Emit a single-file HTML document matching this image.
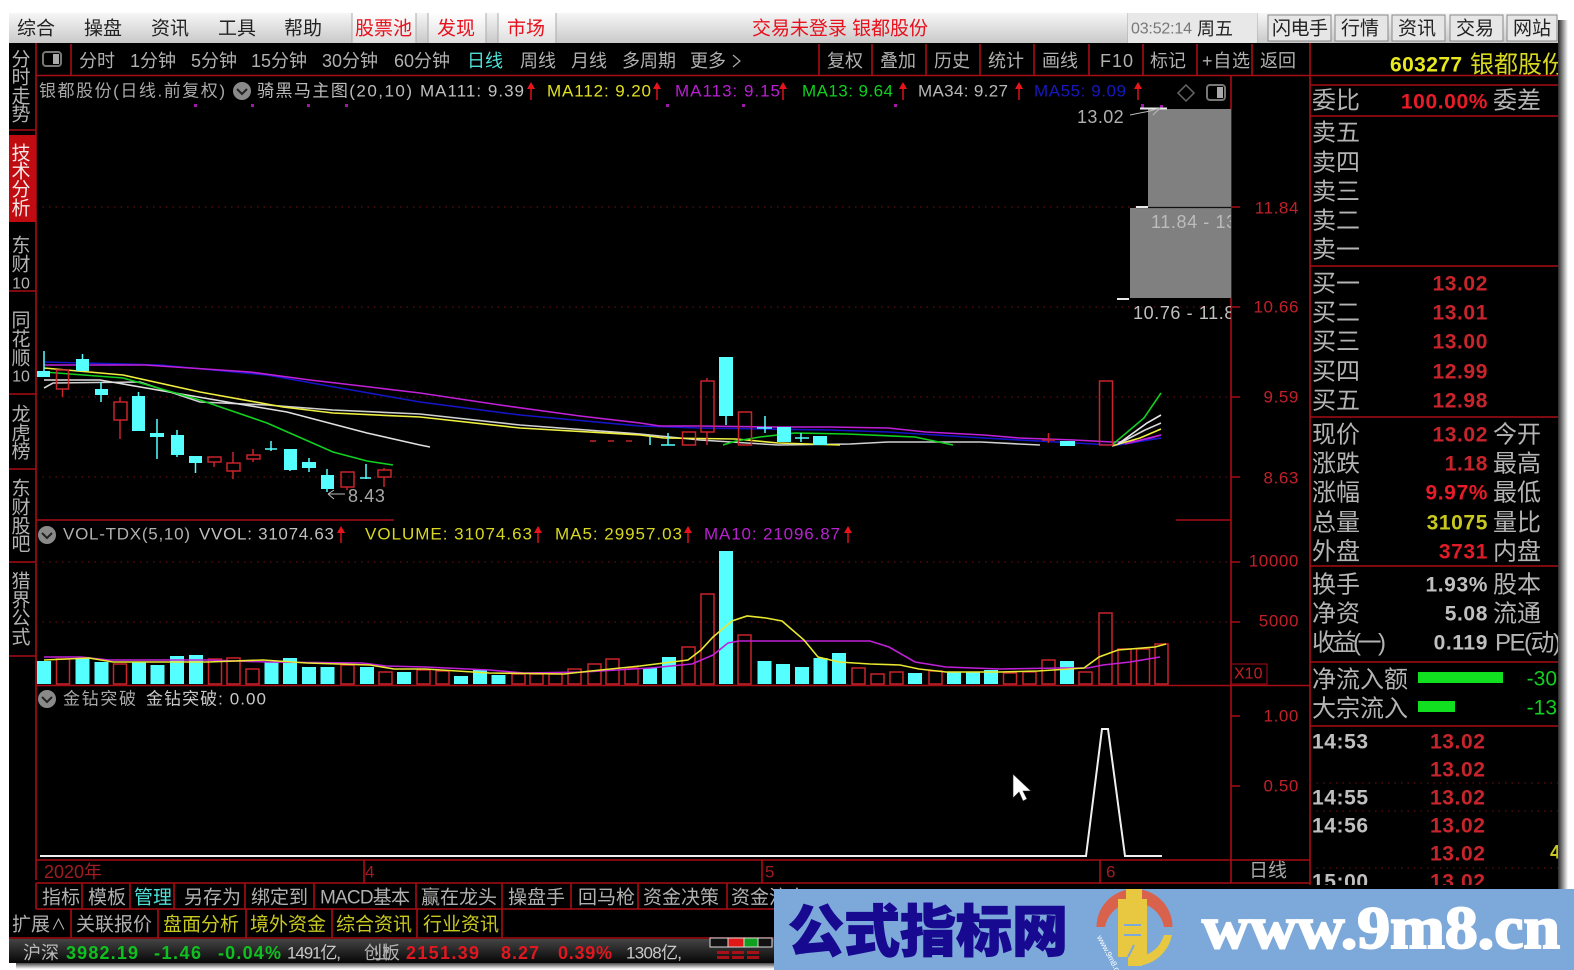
<!DOCTYPE html>
<html><head><meta charset="utf-8"><title>银都股份</title>
<style>
html,body{margin:0;padding:0;background:#fff;width:1574px;height:970px;overflow:hidden}
svg{display:block;font-family:"Liberation Sans","Noto Sans CJK SC",sans-serif;filter:blur(.35px)}
text{dominant-baseline:central;white-space:pre}
.m{font-size:19px;fill:#222}
.mr{font-size:19px;fill:#e8101c}
.t{font-size:18px;fill:#b0b0b0}
.s{font-size:19px;fill:#b4b4b4;text-anchor:middle}
.h{font-size:17px}
.a{font-size:17px;fill:#c0202a;letter-spacing:.6px;text-anchor:end}
.l{font-size:24px;fill:#b4b4b4}
.v{font-size:21px;font-weight:bold;text-anchor:end;letter-spacing:.6px}
.tb{font-size:19px;fill:#b0b0b0}
.idx{font-size:18px;font-weight:bold}
.ln{fill:none;stroke-width:1.6}
.rl{stroke:#a80c14;stroke-width:1.6;fill:none}
.cy{fill:#55ffff}
.cw{stroke:#55ffff;stroke-width:1.5;fill:none}
.rw{stroke:#c8242c;stroke-width:1.5;fill:none}
.dot{stroke:#5c0c10;stroke-width:1.2;stroke-dasharray:1.5 5;fill:none}
</style></head><body>
<svg width="1574" height="970" viewBox="0 0 1574 970" xmlns="http://www.w3.org/2000/svg">
<defs>
<linearGradient id="mg" x1="0" y1="0" x2="0" y2="1"><stop offset="0" stop-color="#f6f6f6"/><stop offset="1" stop-color="#c9c9c9"/></linearGradient>
<linearGradient id="tg" x1="0" y1="0" x2="0" y2="1"><stop offset="0" stop-color="#ffffff"/><stop offset="1" stop-color="#dedede"/></linearGradient>
<linearGradient id="sh" x1="0" y1="0" x2="1" y2="0"><stop offset="0" stop-color="#2a2a2a"/><stop offset="1" stop-color="#ffffff"/></linearGradient>
<linearGradient id="sb" x1="0" y1="0" x2="0" y2="1"><stop offset="0" stop-color="#2a2a2a"/><stop offset="1" stop-color="#ffffff"/></linearGradient>
<linearGradient id="ix" x1="0" y1="0" x2="0" y2="1"><stop offset="0" stop-color="#444"/><stop offset="1" stop-color="#060606"/></linearGradient>
<clipPath id="cr"><rect x="1310" y="43" width="248" height="842"/></clipPath>
<clipPath id="cc"><rect x="36" y="76" width="1195" height="800"/></clipPath>
</defs>
<rect width="1574" height="970" fill="#fff"/>
<rect x="1558" y="20" width="10" height="945" fill="url(#sh)"/>
<rect x="16" y="962" width="760" height="7" fill="url(#sb)"/>
<rect x="9" y="43" width="1549" height="920" fill="#000"/>
<!-- menu -->
<rect x="9" y="13" width="1549" height="30" fill="url(#mg)"/>
<rect x="352" y="13" width="64" height="30" fill="url(#tg)"/>
<rect x="428" y="13" width="58" height="30" fill="url(#tg)"/>
<rect x="498" y="13" width="58" height="30" fill="url(#tg)"/>
<g stroke="#aaa" fill="none"><path d="M352 13V43M416 13V43M428 13V43M486 13V43M498 13V43M556 13V43M1128 13V43M1257 13V43"/></g>
<rect x="1128" y="13" width="129" height="30" fill="#e8e8e8"/>
<g fill="#e6e6e6" stroke="#888"><rect x="1268" y="15" width="63" height="26"/><rect x="1335" y="15" width="53" height="26"/><rect x="1392" y="15" width="53" height="26"/><rect x="1450" y="15" width="53" height="26"/><rect x="1507" y="15" width="50" height="26"/></g>
<text class="m" x="17" y="29">综合</text><text class="m" x="84" y="29">操盘</text><text class="m" x="151" y="29">资讯</text><text class="m" x="218" y="29">工具</text><text class="m" x="284" y="29">帮助</text>
<text class="mr" x="355" y="29">股票池</text><text class="mr" x="437" y="29">发现</text><text class="mr" x="507" y="29">市场</text>
<text class="mr" x="752" y="29" textLength="176">交易未登录 银都股份</text>
<text x="1131" y="29" font-size="16" fill="#777" textLength="61">03:52:14</text><text x="1197" y="29" font-size="18" fill="#222">周五</text>
<text class="m" x="1272" y="29" font-size="18" textLength="56">闪电手</text><text class="m" x="1341" y="29" textLength="38">行情</text><text class="m" x="1398" y="29" textLength="38">资讯</text><text class="m" x="1456" y="29" textLength="38">交易</text><text class="m" x="1513" y="29" textLength="38">网站</text>
<!-- toolbar row -->
<path class="rl" d="M36 75.500H1558M71 44V75M36 43V880M1231 76V883M1310 43V885"/>
<path class="rl" d="M819 44V75M872 44V75M926 44V75M980 44V75M1034 44V75M1089 44V75M1143 44V75M1197 44V75M1252 44V75"/>
<rect x="43" y="52" width="18" height="14" rx="3" fill="none" stroke="#777" stroke-width="2"/><rect x="53" y="54" width="6" height="10" fill="#aaa"/>
<text class="t" x="79" y="61">分时</text><text class="t" x="130" y="61">1分钟</text><text class="t" x="191" y="61">5分钟</text><text class="t" x="251" y="61">15分钟</text><text class="t" x="322" y="61">30分钟</text><text class="t" x="394" y="61">60分钟</text>
<text class="t" x="467" y="61" style="fill:#4fe0d8">日线</text><text class="t" x="520" y="61">周线</text><text class="t" x="571" y="61">月线</text><text class="t" x="622" y="61">多周期</text><text class="t" x="690" y="61">更多</text>
<path d="M733 55L740 61L733 67" fill="none" stroke="#aaa" stroke-width="1.200"/>
<text class="t" x="827" y="61">复权</text><text class="t" x="880" y="61">叠加</text><text class="t" x="934" y="61">历史</text><text class="t" x="988" y="61">统计</text><text class="t" x="1042" y="61">画线</text><text class="t" x="1100" y="61" letter-spacing="1">F10</text><text class="t" x="1150" y="61">标记</text><text class="t" x="1202" y="61" textLength="48">+自选</text><text class="t" x="1260" y="61">返回</text>
<!-- side -->
<path class="rl" d="M9 130H36M9 291H36M9 394H36M9 469H36M9 562H36M9 656H36"/>
<rect x="9" y="135" width="27" height="87" fill="#c00c10"/>
<g>
<text class="s" x="21" y="60">分</text><text class="s" x="21" y="78">时</text><text class="s" x="21" y="97">走</text><text class="s" x="21" y="115">势</text>
<text class="s" x="21" y="154" style="fill:#f4e8e8">技</text><text class="s" x="21" y="172" style="fill:#f4e8e8">术</text><text class="s" x="21" y="190" style="fill:#f4e8e8">分</text><text class="s" x="21" y="209" style="fill:#f4e8e8">析</text>
<text class="s" x="21" y="246">东</text><text class="s" x="21" y="265">财</text><text class="s" x="21" y="284" style="font-size:16px">10</text>
<text class="s" x="21" y="321">同</text><text class="s" x="21" y="340">花</text><text class="s" x="21" y="359">顺</text><text class="s" x="21" y="377" style="font-size:16px">10</text>
<text class="s" x="21" y="415">龙</text><text class="s" x="21" y="434">虎</text><text class="s" x="21" y="452">榜</text>
<text class="s" x="21" y="489">东</text><text class="s" x="21" y="508">财</text><text class="s" x="21" y="527">股</text><text class="s" x="21" y="545">吧</text>
<text class="s" x="21" y="582">猎</text><text class="s" x="21" y="601">界</text><text class="s" x="21" y="619">公</text><text class="s" x="21" y="638">式</text>
</g>
<!-- header of main chart -->
<text class="h" x="39" y="91" fill="#a8a8a8" textLength="186">银都股份(日线.前复权)</text>
<circle cx="242" cy="91" r="9" fill="#8a8a8a"/><path d="M237 89L242 94L247 89" fill="none" stroke="#222" stroke-width="2"/>
<text class="h" x="257" y="91" fill="#bcbcbc" textLength="155">骑黑马主图(20,10)</text>
<text class="h" x="420" y="91" fill="#c0c0c0" textLength="104">MA111: 9.39</text>
<text class="h" x="547" y="91" fill="#e0e020" textLength="104">MA112: 9.20</text>
<text class="h" x="675" y="91" fill="#b820d0" textLength="105">MA113: 9.15</text>
<text class="h" x="802" y="91" fill="#10d020" textLength="91">MA13: 9.64</text>
<text class="h" x="918" y="91" fill="#b8b8b8" textLength="90">MA34: 9.27</text>
<text class="h" x="1034" y="91" fill="#1818c0" textLength="92">MA55: 9.09</text>
<g fill="#e8141c" stroke="#e8141c" stroke-width="1.400"><path d="M531 100V85M657 100V85M783 100V85M903 100V85M1019 100V85M1138 100V85"/><path d="M527 89L531 82L535 89ZM653 89L657 82L661 89ZM779 89L783 82L787 89ZM899 89L903 82L907 89ZM1015 89L1019 82L1023 89ZM1134 89L1138 82L1142 89Z" stroke="none"/></g>
<path d="M1186 85L1194 93L1186 101L1178 93Z" fill="none" stroke="#666" stroke-width="1.500"/>
<rect x="1207" y="85" width="18" height="15" rx="3" fill="none" stroke="#777" stroke-width="2"/><rect x="1217" y="87" width="6" height="11" fill="#aaa"/>
<g fill="#a018a8"><rect x="194" y="104" width="3" height="3"/><rect x="251" y="104" width="3" height="3"/><rect x="307" y="104" width="3" height="3"/><rect x="345" y="104" width="3" height="3"/><rect x="666" y="104" width="3" height="3"/><rect x="742" y="104" width="3" height="3"/><rect x="894" y="104" width="3" height="3"/><rect x="1141" y="104" width="3" height="4"/><rect x="1160" y="105" width="3" height="3"/></g>
<!-- grid -->
<path class="dot" d="M36 207H1231M36 307H1231M36 397H1231M36 477H1231M36 562H1231M36 622H1231"/>
<path class="rl" d="M1231 207H1240M1231 307H1240M1231 397H1240M1231 477H1240M1231 562H1240M1231 622H1240M1231 716H1240M1231 786H1240"/>
<!-- grey boxes -->
<rect x="1148" y="109" width="83" height="98" fill="#808080"/><rect x="1130" y="208" width="101" height="90" fill="#808080"/>
<path d="M1136 207.500H1231" stroke="#111" stroke-width="1.200"/>
<path d="M1140 108.500H1167M1136 207H1148M1117 299H1129" stroke="#e8e8e8" stroke-width="2"/>
<path d="M1130 115L1150 111M1150 111L1160 108M1153 115L1160 108" stroke="#bbb" stroke-width="1" fill="none"/>
<g clip-path="url(#cc)">
<text x="1077" y="117" font-size="18" fill="#b0b0b0" letter-spacing=".4">13.02</text>
<text x="1151" y="222" font-size="18" fill="#bcbcbc" letter-spacing=".6">11.84 - 13.02</text>
<text x="1133" y="313" font-size="18" fill="#c0c0c0" letter-spacing=".6">10.76 - 11.84</text>
</g>
<!-- price lines -->
<g clip-path="url(#cc)">
<polyline class="ln" stroke="#1515c8" points="44,362 160,365 267,375 340,388 420,402 520,415 640,426 700,428 829,430 888,432 984,438 1112,445 1161,438"/>
<polyline class="ln" stroke="#c020d8" points="44,365 145,365 175,367 250,372 310,380 370,387 420,393 500,405 580,416 640,423 660,426 700,426 770,427 829,427 888,428 926,432 984,435 1019,438 1074,440 1112,442 1140,441 1161,435"/>
<polyline class="ln" stroke="#d0d0d0" points="44,388 53,383 140,382 200,402 267,405 333,410 420,414 520,425 640,434 700,440 778,445 850,444 888,442 981,442 1019,444 1040,445"/>
<polyline class="ln" stroke="#f0f040" points="44,368 123,375 200,392 283,407 333,413 420,417 520,428 640,435 664,438 736,439 778,443 840,445"/>
<polyline class="ln" stroke="#e0e0e0" points="44,380 100,380 233,403 287,412 367,433 420,445 430,447"/>
<polyline class="ln" stroke="#10d020" points="44,372 123,378 200,400 267,423 333,452 367,461 393,465"/>
<polyline class="ln" stroke="#10d020" points="723,445 736,441 760,437 795,433 847,434 915,437 953,445"/>
<polyline class="ln" stroke="#1515c8" points="1112,446 1161,438"/>
<polyline class="ln" stroke="#c020d8" points="1125,444 1161,435"/>
<polyline class="ln" stroke="#f0f040" points="1112,446 1140,438 1161,429"/>
<polyline class="ln" stroke="#d8d8d8" points="1118,444 1145,430 1161,423"/>
<polyline class="ln" stroke="#e8e8e8" points="1118,444 1147,423 1161,415"/>
<polyline class="ln" stroke="#10d020" points="1112,445 1144,418 1161,393"/>
</g>
<!-- candles -->
<g>
<path class="cw" d="M44 351V377M82.500 354V371M101 382V402M138.500 392V396M157 419V459M177 430V457M195.500 463V473M271 441V451M265 449H277M290 470V471M309 458V472M327 469V492M366 464V479M360 478H371M650 437V445M668 433V445M661 445H675M726 416V425M765 416V433M757 428H772M801 433V442M795 438H809"/>
<path class="rw" d="M62.500 389V397M120 397V402M120 420V439M214 462V467M233 452V463M233 471V479M253 449V455M253 459V462M347 487V490M384 468V470M384 477V487M707 378V381M707 432V445M1048.500 433V443M1042 440H1055"/>
<g class="cy"><rect x="37" y="371" width="13" height="6"/><rect x="76" y="359" width="13" height="12"/><rect x="95" y="389" width="13" height="6"/><rect x="132" y="396" width="13" height="35"/><rect x="150" y="433" width="14" height="4"/><rect x="171" y="435" width="13" height="20"/><rect x="189" y="456" width="13" height="7"/><rect x="284" y="449" width="13" height="21"/><rect x="302" y="462" width="14" height="6"/><rect x="321" y="475" width="13" height="14"/><rect x="719" y="357" width="14" height="59"/><rect x="777" y="427" width="14" height="15"/><rect x="813" y="436" width="14" height="9"/><rect x="1060" y="441" width="15" height="5"/></g>
<g class="rw"><rect x="56.500" y="370" width="12" height="19"/><rect x="114" y="402" width="13" height="18"/><rect x="208" y="457" width="13" height="5"/><rect x="227" y="463" width="13" height="8"/><rect x="247" y="455" width="13" height="4"/><rect x="341" y="472" width="13" height="15"/><rect x="378" y="470" width="13" height="7"/><rect x="682.500" y="432" width="13" height="13"/><rect x="701" y="381" width="13" height="51"/><rect x="738.500" y="412" width="13" height="33"/><rect x="1099.500" y="381" width="13" height="64"/></g>
<path class="rw" d="M590 441H640" stroke-dasharray="6 12"/>
</g>
<path d="M329 494H345M328 494L334 490M328 494L334 499" stroke="#bbb" stroke-width="1" fill="none"/>
<text x="348" y="496" font-size="18" fill="#a8a8a8" letter-spacing=".6">8.43</text>
<!-- axis labels -->
<g><text class="a" x="1299" y="208">11.84</text><text class="a" x="1299" y="307">10.66</text><text class="a" x="1299" y="397">9.59</text><text class="a" x="1299" y="478">8.63</text><text class="a" x="1299" y="561">10000</text><text class="a" x="1299" y="621">5000</text><text class="a" x="1299" y="716">1.00</text><text class="a" x="1299" y="786">0.50</text></g>
<rect x="1231" y="664" width="36" height="20" fill="none" stroke="#a80c14"/><text x="1234" y="674" font-size="16" fill="#c02028">X10</text>
<path class="rl" d="M36 520H394M1176 520H1231M36 685.500H1310M36 860H1310M36 883H1310"/>
<!-- volume header -->
<circle cx="47" cy="535" r="9" fill="#8a8a8a"/><path d="M42 533L47 538L52 533" fill="none" stroke="#222" stroke-width="2"/>
<text class="h" x="63" y="534" fill="#b0b0b0" textLength="127">VOL-TDX(5,10)</text>
<text class="h" x="199" y="534" fill="#c0c0c0" textLength="135">VVOL: 31074.63</text>
<text class="h" x="365" y="534" fill="#d8d820" textLength="167">VOLUME: 31074.63</text>
<text class="h" x="555" y="534" fill="#d8d820" textLength="127">MA5: 29957.03</text>
<text class="h" x="704" y="534" fill="#b820d0" textLength="136">MA10: 21096.87</text>
<g fill="#e8141c" stroke="#e8141c" stroke-width="1.400"><path d="M341 543V529M538 543V529M688 543V529M848 543V529"/><path d="M337 533L341 526L345 533ZM534 533L538 526L542 533ZM684 533L688 526L692 533ZM844 533L848 526L852 533Z" stroke="none"/></g>
<!-- volume bars -->
<g class="cy"><rect x="37" y="661" width="14" height="23"/><rect x="75.500" y="658" width="14" height="26"/><rect x="94.500" y="662" width="14" height="22"/><rect x="132" y="662" width="14" height="22"/><rect x="150.500" y="665" width="14" height="19"/><rect x="170" y="656" width="14" height="28"/><rect x="189" y="655" width="14" height="29"/><rect x="264.500" y="662" width="14" height="22"/><rect x="283" y="658" width="14" height="26"/><rect x="302" y="667" width="14" height="17"/><rect x="320.500" y="667" width="14" height="17"/><rect x="360" y="667" width="14" height="17"/><rect x="397" y="672" width="14" height="12"/><rect x="454" y="676" width="14" height="8"/><rect x="473" y="670" width="14" height="14"/><rect x="491.500" y="675" width="14" height="9"/>
<rect x="643" y="668" width="14" height="16"/><rect x="662" y="657" width="14" height="27"/><rect x="719" y="551" width="14" height="133"/><rect x="757.500" y="661" width="14" height="23"/><rect x="776" y="664" width="14" height="20"/><rect x="795" y="667" width="14" height="17"/><rect x="813.500" y="658" width="14" height="26"/><rect x="832" y="653" width="14" height="31"/><rect x="908" y="673" width="14" height="11"/><rect x="947" y="672" width="14" height="12"/><rect x="966" y="672" width="14" height="12"/><rect x="984" y="670" width="14" height="14"/><rect x="1060" y="661" width="14" height="23"/></g>
<g class="rw"><rect x="56.500" y="659" width="13" height="25"/><rect x="113.500" y="664" width="13" height="20"/><rect x="208.500" y="659" width="13" height="25"/><rect x="227" y="658" width="13" height="26"/><rect x="246" y="669" width="13" height="15"/><rect x="341" y="665" width="13" height="19"/><rect x="379" y="672" width="13" height="12"/><rect x="417" y="670" width="13" height="14"/><rect x="436" y="671" width="13" height="13"/><rect x="512" y="674" width="13" height="10"/><rect x="530" y="674" width="13" height="10"/><rect x="549" y="674" width="13" height="10"/><rect x="568" y="669" width="13" height="15"/><rect x="588" y="664" width="13" height="20"/><rect x="606" y="659" width="13" height="25"/><rect x="625" y="668" width="13" height="16"/>
<rect x="682" y="647" width="13" height="37"/><rect x="701" y="594" width="13" height="90"/><rect x="738" y="635" width="13" height="49"/><rect x="852" y="668" width="13" height="16"/><rect x="871" y="674" width="13" height="10"/><rect x="890" y="672" width="13" height="12"/><rect x="929" y="671" width="13" height="13"/><rect x="1003.500" y="673" width="13" height="11"/><rect x="1023" y="672" width="13" height="12"/><rect x="1042" y="660" width="13" height="24"/><rect x="1079" y="672" width="13" height="12"/><rect x="1099" y="613" width="13" height="71"/><rect x="1118" y="649" width="13" height="35"/><rect x="1136.500" y="649" width="13" height="35"/><rect x="1155" y="644" width="13" height="40"/></g>
<polyline class="ln" stroke="#c020d8" points="44,657 81,657 109,660 149,660 208,660 267,662 362,663 386,666 425,667 489,670 524,673 584,672 650,668 692,664 713,655 728,643 739,641 824,641 870,641 889,647 915,662 946,667 1000,669 1061,668 1088,668 1103,665 1130,662 1160,657"/>
<polyline class="ln" stroke="#e8e830" points="44,660 89,658 113,662 208,662 263,660 307,663 370,665 394,669 425,669 489,673 564,674 591,671 640,666 688,660 701,650 713,637 732,621 747,616 766,618 782,621 804,640 818,657 839,662 870,664 900,665 919,669 946,672 1000,672 1038,671 1084,668 1099,657 1118,650 1155,647 1166,644"/>
<!-- bottom indicator -->
<circle cx="47" cy="699" r="9" fill="#8a8a8a"/><path d="M42 697L47 702L52 697" fill="none" stroke="#222" stroke-width="2"/>
<text class="h" x="63" y="699" fill="#a8a8a8" textLength="73">金钻突破</text>
<text class="h" x="146" y="699" fill="#c8c8c8" textLength="120">金钻突破: 0.00</text>
<path d="M40 856H1086L1102 729H1108L1125 856H1162" fill="none" stroke="#f0f0f0" stroke-width="2"/>
<path d="M1013 774V798L1019 792L1023 801L1027 799L1023 791L1031 791Z" fill="#fff" stroke="#222" stroke-width=".6"/>
<!-- date row -->
<text x="44" y="872" font-size="18" fill="#a01c20">2020年</text>
<text x="365" y="872" font-size="17" fill="#a01c20">4</text><text x="765" y="872" font-size="17" fill="#a01c20">5</text><text x="1106" y="872" font-size="17" fill="#a01c20">6</text>
<path class="rl" d="M364 860V883M762 860V883M1100 860V883"/>
<text x="1249" y="871" font-size="19" fill="#a8a8a8">日线</text>
<!-- tabs -->
<path class="rl" d="M36 909H1310M36 883V909M82 883V909M130 883V909M174 883V909M245 883V909M314 883V909M416 883V909M502 883V909M571 883V909M638 883V909M727 883V909M9 938H775"/>
<text class="tb" x="42" y="898">指标</text><text class="tb" x="88" y="898">模板</text><text class="tb" x="134" y="898" style="fill:#4fe0d8">管理</text><text class="tb" x="184" y="898">另存为</text><text class="tb" x="251" y="898">绑定到</text><text class="tb" x="320" y="898" textLength="90">MACD基本</text><text class="tb" x="421" y="898" textLength="76">赢在龙头</text><text class="tb" x="508" y="898">操盘手</text><text class="tb" x="578" y="898">回马枪</text><text class="tb" x="643" y="898" textLength="76">资金决策</text><text class="tb" x="731" y="898">资金流向</text>
<path class="rl" d="M71 909V938M158 909V938M246 909V938M332 909V938M417 909V938M502 909V938"/>
<text class="tb" x="12" y="925">扩展</text><text x="51" y="925" font-size="15" fill="#b8b8b8">∧</text><text class="tb" x="76" y="925" textLength="76">关联报价</text>
<text class="tb" x="163" y="925" textLength="76" style="fill:#c8c820">盘面分析</text><text class="tb" x="250" y="925" textLength="76" style="fill:#c8c820">境外资金</text><text class="tb" x="336" y="925" textLength="76" style="fill:#c8c820">综合资讯</text><text class="tb" x="423" y="925" textLength="76" style="fill:#c8c820">行业资讯</text>
<!-- index bar -->
<rect x="9" y="939" width="765" height="24" fill="url(#ix)"/>
<text x="23" y="953" font-size="18" fill="#bbb">沪深</text>
<text class="idx" x="66" y="953" fill="#10c020" textLength="72">3982.19</text>
<text class="idx" x="154" y="953" fill="#10c020" textLength="47">-1.46</text>
<text class="idx" x="218" y="953" fill="#10c020" textLength="63">-0.04%</text>
<text x="287" y="953" font-size="17" fill="#c8c8c8" textLength="54">1491亿,</text>
<text x="364" y="953" font-size="18" fill="#b0b0b0" textLength="36">创业板</text>
<text class="idx" x="406" y="953" fill="#e01820" textLength="73">2151.39</text>
<text class="idx" x="501" y="953" fill="#e01820" textLength="38">8.27</text>
<text class="idx" x="558" y="953" fill="#e01820" textLength="54">0.39%</text>
<text x="626" y="953" font-size="17" fill="#c8c8c8" textLength="56">1308亿,</text>
<g stroke="#ddd" stroke-width="1"><rect x="710" y="938" width="18" height="9" fill="#111"/><rect x="728" y="938" width="16" height="9" fill="#e01818"/><rect x="744" y="938" width="14" height="9" fill="#10a020"/><rect x="758" y="938" width="14" height="9" fill="#111"/></g>
<g fill="#a81018"><rect x="717" y="951" width="12" height="3"/><rect x="732" y="951" width="12" height="3"/><rect x="747" y="951" width="12" height="3"/><rect x="717" y="956" width="12" height="3"/><rect x="732" y="956" width="12" height="3"/><rect x="747" y="956" width="12" height="3"/></g>
<!-- right panel -->
<g clip-path="url(#cr)">
<text x="1390" y="65" font-size="21" font-weight="bold" fill="#e8e820" letter-spacing=".4">603277</text><text x="1470" y="65" font-size="24" fill="#d8d820">银都股份</text>
<path class="rl" d="M1310 85H1558M1310 116H1558M1310 266H1558M1310 417H1558M1310 566H1558M1310 662H1558M1310 726H1558"/>
<g><text class="l" x="1312" y="101">委比</text><text class="l" x="1312" y="133">卖五</text><text class="l" x="1312" y="163">卖四</text><text class="l" x="1312" y="192">卖三</text><text class="l" x="1312" y="221">卖二</text><text class="l" x="1312" y="250">卖一</text>
<text class="l" x="1312" y="284">买一</text><text class="l" x="1312" y="313">买二</text><text class="l" x="1312" y="342">买三</text><text class="l" x="1312" y="372">买四</text><text class="l" x="1312" y="401">买五</text>
<text class="l" x="1312" y="435">现价</text><text class="l" x="1312" y="464">涨跌</text><text class="l" x="1312" y="493">涨幅</text><text class="l" x="1312" y="523">总量</text><text class="l" x="1312" y="552">外盘</text>
<text class="l" x="1312" y="585">换手</text><text class="l" x="1312" y="614">净资</text><text class="l" x="1312" y="643" textLength="74">收益(一)</text>
<text class="l" x="1312" y="680">净流入额</text><text class="l" x="1312" y="709">大宗流入</text>
<text class="l" x="1493" y="101">委差</text><text class="l" x="1493" y="435">今开</text><text class="l" x="1493" y="464">最高</text><text class="l" x="1493" y="493">最低</text><text class="l" x="1493" y="523">量比</text><text class="l" x="1493" y="552">内盘</text><text class="l" x="1493" y="585">股本</text><text class="l" x="1493" y="614">流通</text><text class="l" x="1495" y="643" textLength="66">PE(动)</text></g>
<g>
<text class="v" x="1488" y="102" fill="#e81c28">100.00%</text>
<text class="v" x="1488" y="284" fill="#c8242c">13.02</text><text class="v" x="1488" y="313" fill="#c8242c">13.01</text><text class="v" x="1488" y="342" fill="#c8242c">13.00</text><text class="v" x="1488" y="372" fill="#c8242c">12.99</text><text class="v" x="1488" y="401" fill="#c8242c">12.98</text>
<text class="v" x="1488" y="435" fill="#c8242c">13.02</text><text class="v" x="1488" y="464" fill="#c8242c">1.18</text><text class="v" x="1488" y="493" fill="#e81c28">9.97%</text><text class="v" x="1488" y="523" fill="#c8c820">31075</text><text class="v" x="1488" y="552" fill="#e01c28">3731</text>
<text class="v" x="1488" y="585" fill="#c0c0c0">1.93%</text><text class="v" x="1488" y="614" fill="#c0c0c0">5.08</text><text class="v" x="1488" y="643" fill="#c0c0c0">0.119</text>
</g>
<rect x="1418" y="672" width="85" height="11" fill="#10e020"/><rect x="1418" y="701" width="37" height="11" fill="#10e020"/>
<text x="1557" y="679" font-size="21" fill="#10d020" text-anchor="end">-30</text><text x="1557" y="708" font-size="21" fill="#10d020" text-anchor="end">-13</text>
<path class="dot" d="M1310 783H1558M1310 811H1558M1310 868H1558"/>
<g font-size="21" font-weight="bold" fill="#c0c0c0" letter-spacing=".6"><text x="1312" y="742">14:53</text><text x="1312" y="798">14:55</text><text x="1312" y="826">14:56</text><text x="1312" y="882">15:00</text></g>
<g font-size="21" font-weight="bold" fill="#c8242c" letter-spacing=".6"><text x="1430" y="742">13.02</text><text x="1430" y="770">13.02</text><text x="1430" y="798">13.02</text><text x="1430" y="826">13.02</text><text x="1430" y="854">13.02</text><text x="1430" y="882">13.02</text></g>
<text x="1550" y="853" font-size="19" font-weight="bold" fill="#c8c820">4</text>
</g>
<!-- banner -->
<rect x="774" y="889" width="800" height="81" fill="#7ca9d9"/>
<text x="788" y="928" font-size="56" font-weight="900" fill="#180a90" stroke="#180a90" stroke-width="1.200" font-family="'Noto Sans CJK SC',sans-serif" textLength="280">公式指标网</text>
<path d="M1096.500 927A38 38 0 0 1 1172.500 927L1164 927A30 30 0 0 0 1105 927Z" fill="#d9624c"/>
<path d="M1172.500 927A38 38 0 0 1 1134.500 966L1134.500 957A30 30 0 0 0 1164 935L1172 935Z" fill="#e8c840"/>
<path d="M1126 889H1142V899H1147V957H1142V966H1128V957H1118V899H1126Z" fill="#e8c840"/>
<path d="M1124 925H1141M1124 935H1141M1134 945L1128 957" stroke="#7ca9d9" stroke-width="2" fill="none"/>
<text x="0" y="0" font-size="8" fill="#fff" transform="translate(1099 936) rotate(62)" textLength="44">www.9m8.cn</text>
<text x="1202" y="928" font-size="60" font-weight="bold" fill="#fff" stroke="#fff" stroke-width="2" font-family="'Liberation Serif',serif" textLength="358" lengthAdjust="spacingAndGlyphs">www.9m8.cn</text>
</svg>
</body></html>
